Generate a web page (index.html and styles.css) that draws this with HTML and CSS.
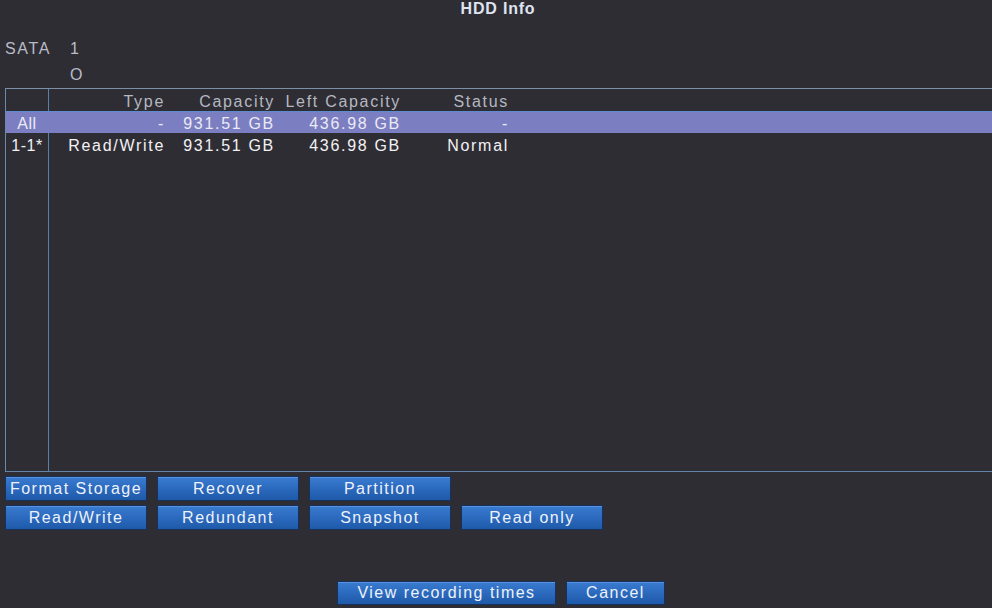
FILE: index.html
```html
<!DOCTYPE html>
<html>
<head>
<meta charset="utf-8">
<link rel="stylesheet" href="styles.css">
</head>
<body>
<div class="screen">
  <div class="title">HDD Info</div>
  <div class="sata">
    <div class="sata-line"><span class="sata-label">SATA</span><span class="sata-val">1</span></div>
    <div class="sata-line"><span class="sata-label"></span><span class="sata-val">O</span></div>
  </div>
  <div class="frame">
    <div class="row head">
      <div class="c0"></div>
      <div class="c">Type</div>
      <div class="c">Capacity</div>
      <div class="c">Left Capacity</div>
      <div class="c">Status</div>
      <div class="c rest"></div>
    </div>
    <div class="row sel">
      <div class="c0">All</div>
      <div class="c">-</div>
      <div class="c">931.51 GB</div>
      <div class="c">436.98 GB</div>
      <div class="c">-</div>
      <div class="c rest"></div>
    </div>
    <div class="row data">
      <div class="c0">1-1*</div>
      <div class="c">Read/Write</div>
      <div class="c">931.51 GB</div>
      <div class="c">436.98 GB</div>
      <div class="c">Normal</div>
      <div class="c rest"></div>
    </div>
    <div class="row filler">
      <div class="c0"></div>
    </div>
  </div>
  <div class="btns">
    <div class="btn-row">
      <button class="btn">Format Storage</button>
      <button class="btn">Recover</button>
      <button class="btn">Partition</button>
    </div>
    <div class="btn-row">
      <button class="btn">Read/Write</button>
      <button class="btn">Redundant</button>
      <button class="btn">Snapshot</button>
      <button class="btn">Read only</button>
    </div>
  </div>
  <div class="footer">
    <button class="btn wide">View recording times</button>
    <button class="btn small">Cancel</button>
  </div>
</div>
</body>
</html>
```
FILE: styles.css
```css
html, body {
  margin: 0;
  padding: 0;
  background: #2f2d34;
  overflow: hidden;
}
body {
  width: 992px;
  height: 608px;
  font-family: "Liberation Sans", Arial, sans-serif;
  font-size: 16px;
  letter-spacing: 1.7px;
  color: #e9e9ee;
}
.screen {
  display: flex;
  flex-direction: column;
  height: 608px;
}
.title {
  height: 18px;
  line-height: 18px;
  text-align: center;
  padding-left: 4px;
  color: #dfe4f0;
  font-weight: bold;
  letter-spacing: 0.8px;
}
.sata {
  margin-top: 18px;
  padding-left: 5px;
  color: #b9bcc6;
}
.sata-line {
  display: flex;
  height: 26px;
  line-height: 26px;
}
.sata-label {
  width: 65px;
}
.frame {
  margin-left: 5px;
  height: 382px;
  border-top: 1px solid #7d8fa6;
  border-left: 1px solid #6a89ad;
  border-bottom: 1px solid #6283a8;
  display: flex;
  flex-direction: column;
}
.row {
  display: grid;
  grid-template-columns: 43px 118px 110px 126px 108px 1fr;
  height: 22px;
  line-height: 25px;
  white-space: nowrap;
}
.c0 {
  border-right: 1px solid #5a7fa8;
  text-align: center;
  letter-spacing: 0.5px;
}
.c {
  text-align: right;
  padding-right: 2px;
}
.rest {
  padding: 0;
}
.head {
  color: #b4b8c2;
}
.sel {
  background: #7b7fc1;
  color: #eceaf6;
  border-top: 1px solid #5f8cd0;
  height: 21px;
  line-height: 23px;
}
.sel .c0 {
  border-right-color: #7b7fc1;
}
.data {
  color: #f2f2f4;
}
.filler {
  flex: 1;
}
.btns {
  margin-top: 4px;
  padding-left: 5px;
  display: flex;
  flex-direction: column;
  gap: 4px;
}
.btn-row {
  display: flex;
  gap: 10px;
}
.btn {
  width: 142px;
  height: 25px;
  padding: 0;
  margin: 0;
  border: 1px solid #16315c;
  background: linear-gradient(#3a7cd0, #2a68bc 55%, #1f5aa9);
  box-shadow: inset 0 1px 0 rgba(140, 190, 255, 0.35);
  color: #eef2fa;
  font-family: "Liberation Sans", Arial, sans-serif;
  font-size: 16px;
  letter-spacing: 1.5px;
  line-height: 22px;
  text-align: center;
  white-space: nowrap;
}
.footer {
  margin-top: 51px;
  display: flex;
  justify-content: center;
  gap: 10px;
  padding-left: 10px;
}
.btn.wide {
  width: 219px;
  height: 24px;
}
.btn.small {
  width: 99px;
  height: 24px;
}
```
